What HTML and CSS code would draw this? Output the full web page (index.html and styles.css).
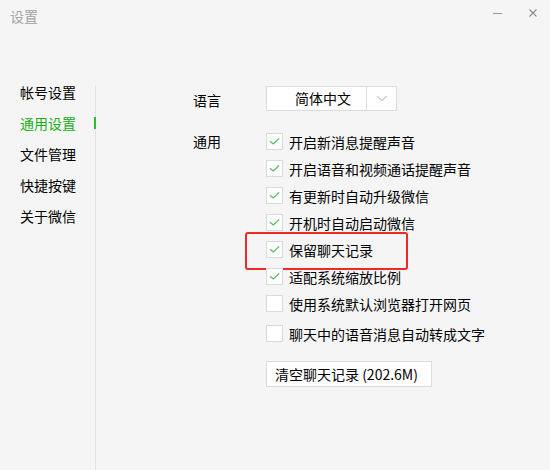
FILE: index.html
```html
<!DOCTYPE html>
<html lang="zh-CN">
<head>
<meta charset="utf-8">
<title>设置</title>
<link rel="stylesheet" href="styles.css">
</head>
<body>
<div class="window">
  <header class="titlebar">
    <span class="title">设置</span>
    <div class="controls">
      <span class="min"></span>
      <svg class="close" width="8" height="8" viewBox="0 0 8 8"><path d="M0.5 0.5 L7.5 7.5 M7.5 0.5 L0.5 7.5" stroke="#8a8a8a" stroke-width="1.1" fill="none"/></svg>
    </div>
  </header>
  <div class="main">
    <nav class="sidebar">
      <ul class="nav">
        <li>帐号设置</li>
        <li class="active">通用设置</li>
        <li>文件管理</li>
        <li>快捷按键</li>
        <li>关于微信</li>
      </ul>
    </nav>
    <section class="content">
      <div class="row lang">
        <div class="label">语言</div>
        <div class="select">
          <span class="select-value">简体中文</span>
          <span class="select-arrow"><svg width="12" height="7" viewBox="0 0 12 7"><path d="M1 1 L6 5.5 L11 1" stroke="#c8c8c8" stroke-width="1.1" fill="none"/></svg></span>
        </div>
      </div>
      <div class="row general">
        <div class="label label-general">通用</div>
        <div class="options">
          <div class="opt"><span class="cb"><svg width="17" height="17" viewBox="0 0 17 17"><path d="M4 8.2 L7.3 11 L13.2 5.4" stroke="#4fbf4f" stroke-width="1.2" fill="none"/></svg></span><span>开启新消息提醒声音</span></div>
          <div class="opt"><span class="cb"><svg width="17" height="17" viewBox="0 0 17 17"><path d="M4 8.2 L7.3 11 L13.2 5.4" stroke="#4fbf4f" stroke-width="1.2" fill="none"/></svg></span><span>开启语音和视频通话提醒声音</span></div>
          <div class="opt"><span class="cb"><svg width="17" height="17" viewBox="0 0 17 17"><path d="M4 8.2 L7.3 11 L13.2 5.4" stroke="#4fbf4f" stroke-width="1.2" fill="none"/></svg></span><span>有更新时自动升级微信</span></div>
          <div class="opt"><span class="cb"><svg width="17" height="17" viewBox="0 0 17 17"><path d="M4 8.2 L7.3 11 L13.2 5.4" stroke="#4fbf4f" stroke-width="1.2" fill="none"/></svg></span><span>开机时自动启动微信</span></div>
          <div class="opt highlighted"><span class="cb"><svg width="17" height="17" viewBox="0 0 17 17"><path d="M4 8.2 L7.3 11 L13.2 5.4" stroke="#4fbf4f" stroke-width="1.2" fill="none"/></svg></span><span>保留聊天记录</span></div>
          <div class="opt"><span class="cb"><svg width="17" height="17" viewBox="0 0 17 17"><path d="M4 8.2 L7.3 11 L13.2 5.4" stroke="#4fbf4f" stroke-width="1.2" fill="none"/></svg></span><span>适配系统缩放比例</span></div>
          <div class="opt"><span class="cb"></span><span>使用系统默认浏览器打开网页</span></div>
          <div class="opt opt-last"><span class="cb"></span><span>聊天中的语音消息自动转成文字</span></div>
          <button class="btn">清空聊天记录 (202.6M)</button>
        </div>
      </div>
    </section>
  </div>
</div>
</body>
</html>
```
FILE: styles.css
```css
* { box-sizing: border-box; }
html, body {
  margin: 0;
  padding: 0;
  background: #f5f5f5;
}
body {
  font-family: "Noto Sans CJK SC", "Noto Sans", sans-serif;
  font-size: 14px;
  color: #000;
}
.window {
  width: 550px;
  height: 470px;
  display: flex;
  flex-direction: column;
  overflow: hidden;
}
.titlebar {
  height: 34px;
  display: flex;
  justify-content: space-between;
  align-items: flex-start;
  padding: 0 13px 0 10px;
}
.title {
  padding-top: 6px;
  line-height: 20px;
  font-size: 14px;
  color: #a3a3a3;
}
.controls {
  display: flex;
  align-items: center;
  gap: 27px;
  height: 8px;
  margin-top: 9px;
}
.min {
  display: block;
  width: 9px;
  height: 1px;
  background: #9a9a9a;
}
.close { display: block; }
.main {
  flex: 1;
  display: flex;
  margin-top: 51px;
}
.sidebar {
  width: 96px;
  border-right: 1px solid #e3e3e3;
}
.nav {
  list-style: none;
  margin: 0;
  padding: 0;
  display: flex;
  flex-direction: column;
  gap: 17px;
}
.nav li {
  position: relative;
  line-height: 14px;
  padding-left: 20px;
  color: #000;
}
.nav li.active { color: #1aad19; }
.nav li.active::after {
  content: "";
  position: absolute;
  right: -1px;
  top: 1px;
  width: 2px;
  height: 12px;
  background: #2fbb2f;
}
.content {
  flex: 1;
  padding: 1px 0 0 97px;
}
.row {
  display: flex;
}
.label {
  width: 73px;
  color: #000;
}
.lang {
  align-items: center;
  height: 25px;
}
.lang .label { padding-top: 2px; }
.select {
  display: flex;
  width: 131px;
  height: 25px;
  background: #fff;
  border: 1px solid #dcdcdc;
}
.select-value {
  width: 100px;
  padding-left: 28px;
  line-height: 23px;
  border-right: 1px solid #dcdcdc;
}
.select-arrow {
  flex: 1;
  display: flex;
  align-items: center;
  justify-content: center;
}
.general {
  margin-top: 17px;
  align-items: flex-start;
}
.label-general { line-height: 27px; }
.options {
  display: flex;
  flex-direction: column;
  align-items: flex-start;
}
.opt {
  position: relative;
  display: flex;
  align-items: center;
  gap: 6px;
  height: 27px;
  line-height: 20px;
  color: #000;
}
.opt-last { margin-top: 3px; }
.cb {
  width: 17px;
  height: 17px;
  background: #fff;
  border: 1px solid #dadada;
  display: flex;
  align-items: center;
  justify-content: center;
}
.cb svg { display: block; margin: -1px; }
.highlighted::after {
  content: "";
  position: absolute;
  left: -21px;
  top: -4px;
  width: 159px;
  height: 34px;
  border: 2.5px solid #ee2a22;
  border-radius: 3px;
}
.btn {
  margin-top: 14px;
  width: 166px;
  height: 26px;
  padding: 0 0 0 8px;
  text-align: left;
  background: #fff;
  border: 1px solid #dcdcdc;
  border-radius: 0;
  font-family: inherit;
  font-size: 14px;
  color: #000;
  line-height: 24px;
}
```
